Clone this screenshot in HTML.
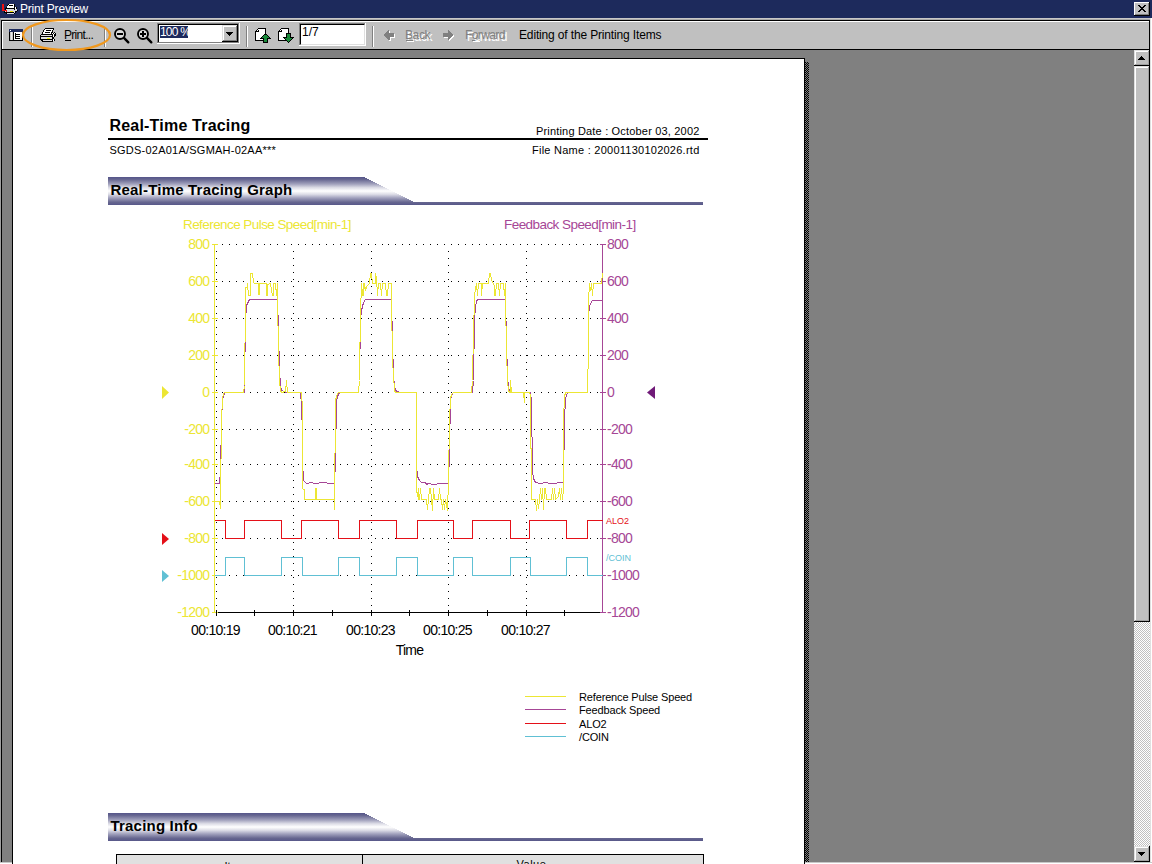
<!DOCTYPE html>
<html><head><meta charset="utf-8"><style>
html,body{margin:0;padding:0;width:1152px;height:864px;overflow:hidden;background:#808080;}
body{position:relative;font-family:"Liberation Sans", sans-serif;}
div{box-sizing:border-box;}
svg{position:absolute;overflow:visible;}
</style></head><body>
<div style="position:absolute;left:0px;top:0px;width:1152px;height:18px;background:#1d2a5c;"></div>
<svg style="left:0px;top:0px" width="18" height="14" shape-rendering="crispEdges"><rect x="2" y="4" width="2" height="1" fill="#f01010"/><rect x="8" y="4" width="1" height="1" fill="#000"/><rect x="9" y="4" width="5" height="1" fill="#fff"/><rect x="14" y="4" width="1" height="1" fill="#000"/><rect x="2" y="5" width="2" height="1" fill="#f01010"/><rect x="7" y="5" width="1" height="1" fill="#000"/><rect x="8" y="5" width="1" height="1" fill="#fff"/><rect x="9" y="5" width="4" height="1" fill="#000"/><rect x="13" y="5" width="1" height="1" fill="#fff"/><rect x="14" y="5" width="1" height="1" fill="#000"/><rect x="2" y="6" width="2" height="1" fill="#f01010"/><rect x="7" y="6" width="7" height="1" fill="#fff"/><rect x="14" y="6" width="1" height="1" fill="#000"/><rect x="2" y="7" width="2" height="1" fill="#f01010"/><rect x="6" y="7" width="1" height="1" fill="#000"/><rect x="7" y="7" width="7" height="1" fill="#fff"/><rect x="14" y="7" width="1" height="1" fill="#000"/><rect x="15" y="7" width="1" height="1" fill="#fff"/><rect x="16" y="7" width="1" height="1" fill="#000"/><rect x="2" y="8" width="2" height="1" fill="#f01010"/><rect x="5" y="8" width="10" height="1" fill="#000"/><rect x="15" y="8" width="1" height="1" fill="#fff"/><rect x="16" y="8" width="1" height="1" fill="#000"/><rect x="2" y="9" width="2" height="1" fill="#f01010"/><rect x="5" y="9" width="1" height="1" fill="#000"/><rect x="6" y="9" width="8" height="1" fill="#d8d8e0"/><rect x="14" y="9" width="1" height="1" fill="#000"/><rect x="15" y="9" width="2" height="1" fill="#d8d8e0"/><rect x="2" y="10" width="5" height="1" fill="#f01010"/><rect x="7" y="10" width="10" height="1" fill="#d8d8e0"/><rect x="17" y="10" width="1" height="1" fill="#000"/><rect x="4" y="11" width="1" height="1" fill="#000"/><rect x="5" y="11" width="1" height="1" fill="#d8d8e0"/><rect x="6" y="11" width="1" height="1" fill="#f01010"/><rect x="7" y="11" width="3" height="1" fill="#d8d8e0"/><rect x="10" y="11" width="3" height="1" fill="#f0e000"/><rect x="13" y="11" width="2" height="1" fill="#d8d8e0"/><rect x="15" y="11" width="2" height="1" fill="#000"/><rect x="4" y="12" width="10" height="1" fill="#000"/><rect x="14" y="12" width="1" height="1" fill="#d8d8e0"/><rect x="15" y="12" width="1" height="1" fill="#000"/><rect x="6" y="13" width="1" height="1" fill="#000"/><rect x="7" y="13" width="7" height="1" fill="#d8d8e0"/><rect x="14" y="13" width="1" height="1" fill="#000"/></svg>
<div style="position:absolute;left:20px;top:3px;font-size:12px;line-height:12px;color:#fff;font-weight:400;letter-spacing:-0.2px;white-space:pre;">Print Preview</div>
<svg style="position:absolute;left:1134px;top:2px" width="16" height="14" shape-rendering="crispEdges">
<rect x="0" y="0" width="16" height="14" fill="#000"/><rect x="0" y="0" width="15" height="13" fill="#fff"/>
<rect x="1" y="1" width="14" height="12" fill="#808080"/><rect x="1" y="1" width="13" height="11" fill="#c0c0c0"/>
<path d="M4 3h2v1h1v1h2v-1h1v-1h2v1h-1v1h-1v1h-1v1h1v1h1v1h1v1h-2v-1h-1v-1h-2v1h-1v1h-2v-1h1v-1h1v-1h1v-1h-1v-1h-1v-1h-1z" fill="#000"/>
</svg>
<div style="position:absolute;left:0px;top:18px;width:1152px;height:2px;background:#c8c8c8;"></div>
<div style="position:absolute;left:0px;top:19px;width:1152px;height:1px;background:#a8a8a8;"></div>
<div style="position:absolute;left:0px;top:20px;width:1152px;height:30px;background:#c0c0c0;"></div>
<div style="position:absolute;left:0px;top:20px;width:1150px;height:1px;background:#000;"></div>
<div style="position:absolute;left:1px;top:20px;width:1px;height:844px;background:#000;"></div>
<div style="position:absolute;left:2px;top:21px;width:1147px;height:1px;background:#fff;"></div>
<div style="position:absolute;left:2px;top:21px;width:1px;height:28px;background:#fff;"></div>
<div style="position:absolute;left:1149px;top:20px;width:1px;height:30px;background:#000;"></div>
<div style="position:absolute;left:1150px;top:18px;width:1px;height:846px;background:#e0e0e0;"></div>
<div style="position:absolute;left:1151px;top:18px;width:1px;height:846px;background:#fff;"></div>
<div style="position:absolute;left:0px;top:18px;width:1px;height:846px;background:#a0a0a0;"></div>
<div style="position:absolute;left:2px;top:49px;width:1147px;height:1px;background:#000;"></div>
<div style="position:absolute;left:2px;top:50px;width:1132px;height:812px;background:#808080;"></div>
<div style="position:absolute;left:0px;top:862px;width:1152px;height:1px;background:#c8c8c8;"></div>
<div style="position:absolute;left:0px;top:863px;width:1152px;height:1px;background:#fff;"></div>
<div style="position:absolute;left:31px;top:27px;width:1px;height:20px;background:#808080;"></div>
<div style="position:absolute;left:32px;top:27px;width:1px;height:20px;background:#fff;"></div>
<div style="position:absolute;left:104px;top:27px;width:1px;height:20px;background:#808080;"></div>
<div style="position:absolute;left:105px;top:27px;width:1px;height:20px;background:#fff;"></div>
<div style="position:absolute;left:246px;top:26px;width:1px;height:21px;background:#808080;"></div>
<div style="position:absolute;left:247px;top:26px;width:1px;height:21px;background:#fff;"></div>
<div style="position:absolute;left:372px;top:26px;width:1px;height:21px;background:#808080;"></div>
<div style="position:absolute;left:373px;top:26px;width:1px;height:21px;background:#fff;"></div>
<svg style="left:9px;top:29px" width="14" height="12" shape-rendering="crispEdges"><rect x="0" y="0" width="14" height="1" fill="#1d2a5c"/><rect x="0" y="1" width="1" height="1" fill="#1d2a5c"/><rect x="1" y="1" width="1" height="1" fill="#fff"/><rect x="2" y="1" width="12" height="1" fill="#1d2a5c"/><rect x="0" y="2" width="14" height="1" fill="#1d2a5c"/><rect x="0" y="3" width="1" height="1" fill="#000"/><rect x="1" y="3" width="1" height="1" fill="#c8c8c8"/><rect x="2" y="3" width="1" height="1" fill="#e8e8e8"/><rect x="3" y="3" width="1" height="1" fill="#c8c8c8"/><rect x="4" y="3" width="1" height="1" fill="#000"/><rect x="5" y="3" width="8" height="1" fill="#fff"/><rect x="13" y="3" width="1" height="1" fill="#000"/><rect x="0" y="4" width="1" height="1" fill="#000"/><rect x="1" y="4" width="1" height="1" fill="#c8c8c8"/><rect x="2" y="4" width="1" height="1" fill="#e8e8e8"/><rect x="3" y="4" width="1" height="1" fill="#c8c8c8"/><rect x="4" y="4" width="1" height="1" fill="#000"/><rect x="5" y="4" width="1" height="1" fill="#fff"/><rect x="6" y="4" width="1" height="1" fill="#000"/><rect x="7" y="4" width="6" height="1" fill="#fff"/><rect x="13" y="4" width="1" height="1" fill="#000"/><rect x="0" y="5" width="1" height="1" fill="#000"/><rect x="1" y="5" width="1" height="1" fill="#c8c8c8"/><rect x="2" y="5" width="1" height="1" fill="#e8e8e8"/><rect x="3" y="5" width="1" height="1" fill="#c8c8c8"/><rect x="4" y="5" width="1" height="1" fill="#000"/><rect x="5" y="5" width="1" height="1" fill="#fff"/><rect x="6" y="5" width="5" height="1" fill="#000"/><rect x="11" y="5" width="2" height="1" fill="#fff"/><rect x="13" y="5" width="1" height="1" fill="#000"/><rect x="0" y="6" width="1" height="1" fill="#000"/><rect x="1" y="6" width="1" height="1" fill="#c8c8c8"/><rect x="2" y="6" width="1" height="1" fill="#e8e8e8"/><rect x="3" y="6" width="1" height="1" fill="#c8c8c8"/><rect x="4" y="6" width="1" height="1" fill="#000"/><rect x="5" y="6" width="1" height="1" fill="#fff"/><rect x="6" y="6" width="1" height="1" fill="#000"/><rect x="7" y="6" width="6" height="1" fill="#fff"/><rect x="13" y="6" width="1" height="1" fill="#000"/><rect x="0" y="7" width="1" height="1" fill="#000"/><rect x="1" y="7" width="1" height="1" fill="#c8c8c8"/><rect x="2" y="7" width="1" height="1" fill="#e8e8e8"/><rect x="3" y="7" width="1" height="1" fill="#c8c8c8"/><rect x="4" y="7" width="1" height="1" fill="#000"/><rect x="5" y="7" width="1" height="1" fill="#fff"/><rect x="6" y="7" width="5" height="1" fill="#000"/><rect x="11" y="7" width="2" height="1" fill="#fff"/><rect x="13" y="7" width="1" height="1" fill="#000"/><rect x="0" y="8" width="1" height="1" fill="#000"/><rect x="1" y="8" width="1" height="1" fill="#c8c8c8"/><rect x="2" y="8" width="1" height="1" fill="#e8e8e8"/><rect x="3" y="8" width="1" height="1" fill="#c8c8c8"/><rect x="4" y="8" width="1" height="1" fill="#000"/><rect x="5" y="8" width="1" height="1" fill="#fff"/><rect x="6" y="8" width="1" height="1" fill="#000"/><rect x="7" y="8" width="6" height="1" fill="#fff"/><rect x="13" y="8" width="1" height="1" fill="#000"/><rect x="0" y="9" width="1" height="1" fill="#000"/><rect x="1" y="9" width="1" height="1" fill="#c8c8c8"/><rect x="2" y="9" width="1" height="1" fill="#e8e8e8"/><rect x="3" y="9" width="1" height="1" fill="#c8c8c8"/><rect x="4" y="9" width="1" height="1" fill="#000"/><rect x="5" y="9" width="1" height="1" fill="#fff"/><rect x="6" y="9" width="5" height="1" fill="#000"/><rect x="11" y="9" width="2" height="1" fill="#fff"/><rect x="13" y="9" width="1" height="1" fill="#000"/><rect x="0" y="10" width="1" height="1" fill="#000"/><rect x="1" y="10" width="1" height="1" fill="#c8c8c8"/><rect x="2" y="10" width="1" height="1" fill="#e8e8e8"/><rect x="3" y="10" width="1" height="1" fill="#c8c8c8"/><rect x="4" y="10" width="1" height="1" fill="#000"/><rect x="5" y="10" width="8" height="1" fill="#fff"/><rect x="13" y="10" width="1" height="1" fill="#000"/><rect x="0" y="11" width="14" height="1" fill="#000"/></svg>
<svg style="left:40px;top:28px" width="16" height="14" shape-rendering="crispEdges"><rect x="5" y="0" width="9" height="1" fill="#000"/><rect x="4" y="1" width="1" height="1" fill="#000"/><rect x="5" y="1" width="8" height="1" fill="#fff"/><rect x="13" y="1" width="1" height="1" fill="#000"/><rect x="3" y="2" width="1" height="1" fill="#000"/><rect x="4" y="2" width="2" height="1" fill="#fff"/><rect x="6" y="2" width="5" height="1" fill="#000"/><rect x="11" y="2" width="1" height="1" fill="#fff"/><rect x="12" y="2" width="1" height="1" fill="#000"/><rect x="3" y="3" width="1" height="1" fill="#000"/><rect x="4" y="3" width="8" height="1" fill="#fff"/><rect x="12" y="3" width="1" height="1" fill="#000"/><rect x="2" y="4" width="1" height="1" fill="#000"/><rect x="3" y="4" width="2" height="1" fill="#fff"/><rect x="5" y="4" width="5" height="1" fill="#000"/><rect x="10" y="4" width="1" height="1" fill="#fff"/><rect x="11" y="4" width="2" height="1" fill="#000"/><rect x="14" y="4" width="1" height="1" fill="#000"/><rect x="2" y="5" width="1" height="1" fill="#000"/><rect x="3" y="5" width="8" height="1" fill="#fff"/><rect x="11" y="5" width="1" height="1" fill="#000"/><rect x="12" y="5" width="1" height="1" fill="#fff"/><rect x="13" y="5" width="1" height="1" fill="#000"/><rect x="14" y="5" width="1" height="1" fill="#fff"/><rect x="15" y="5" width="1" height="1" fill="#000"/><rect x="1" y="6" width="12" height="1" fill="#000"/><rect x="13" y="6" width="1" height="1" fill="#fff"/><rect x="14" y="6" width="2" height="1" fill="#000"/><rect x="0" y="7" width="1" height="1" fill="#000"/><rect x="1" y="7" width="11" height="1" fill="#e0e0e0"/><rect x="12" y="7" width="1" height="1" fill="#000"/><rect x="13" y="7" width="1" height="1" fill="#fff"/><rect x="14" y="7" width="2" height="1" fill="#000"/><rect x="0" y="8" width="13" height="1" fill="#000"/><rect x="13" y="8" width="1" height="1" fill="#fff"/><rect x="14" y="8" width="1" height="1" fill="#000"/><rect x="0" y="9" width="1" height="1" fill="#000"/><rect x="1" y="9" width="11" height="1" fill="#e0e0e0"/><rect x="12" y="9" width="2" height="1" fill="#000"/><rect x="0" y="10" width="1" height="1" fill="#000"/><rect x="1" y="10" width="6" height="1" fill="#e0e0e0"/><rect x="7" y="10" width="3" height="1" fill="#f0f000"/><rect x="10" y="10" width="2" height="1" fill="#e0e0e0"/><rect x="12" y="10" width="2" height="1" fill="#000"/><rect x="0" y="11" width="13" height="1" fill="#000"/><rect x="13" y="11" width="1" height="1" fill="#fff"/><rect x="14" y="11" width="1" height="1" fill="#000"/><rect x="1" y="12" width="2" height="1" fill="#000"/><rect x="3" y="12" width="9" height="1" fill="#e0e0e0"/><rect x="12" y="12" width="1" height="1" fill="#000"/><rect x="13" y="12" width="1" height="1" fill="#fff"/><rect x="14" y="12" width="1" height="1" fill="#000"/><rect x="2" y="13" width="11" height="1" fill="#000"/></svg>
<div style="position:absolute;left:64px;top:29px;font-size:12px;line-height:12px;color:#000;font-weight:400;letter-spacing:-0.7px;white-space:pre;">Print...</div>
<div style="position:absolute;left:65px;top:40px;width:6px;height:1px;background:#000;"></div>
<svg style="left:114px;top:28px" width="16" height="16">
<circle cx="6" cy="6" r="5" fill="#dcdcdc" stroke="#000" stroke-width="1.9"/>
<line x1="10.2" y1="10.2" x2="14.3" y2="14.3" stroke="#000" stroke-width="2.4" stroke-linecap="round"/>
<g shape-rendering="crispEdges"><rect x="3" y="5" width="6" height="2" fill="#000"/></g></svg>
<svg style="left:137px;top:28px" width="16" height="16">
<circle cx="6" cy="6" r="5" fill="#dcdcdc" stroke="#000" stroke-width="1.9"/>
<line x1="10.2" y1="10.2" x2="14.3" y2="14.3" stroke="#000" stroke-width="2.4" stroke-linecap="round"/>
<g shape-rendering="crispEdges"><rect x="3" y="5" width="6" height="2" fill="#000"/><rect x="5" y="3" width="2" height="6" fill="#000"/></g></svg>
<div style="position:absolute;left:157px;top:23px;width:83px;height:21px;background:#fff;"></div>
<div style="position:absolute;left:157px;top:23px;width:82px;height:20px;background:#808080;"></div>
<div style="position:absolute;left:158px;top:24px;width:80px;height:18px;background:#000;"></div>
<div style="position:absolute;left:159px;top:25px;width:79px;height:17px;background:#fff;"></div>
<div style="position:absolute;left:159px;top:25px;width:63px;height:17px;background:#fff;"></div>
<div style="position:absolute;left:160px;top:26px;width:28px;height:12px;background:#1d2a5c;"></div>
<div style="position:absolute;left:160px;top:26px;font-size:12px;line-height:12px;color:#fff;font-weight:400;letter-spacing:-0.8px;white-space:pre;">100 %</div>
<svg style="left:222px;top:25px" width="16" height="17" shape-rendering="crispEdges">
<rect x="0" y="0" width="16" height="17" fill="#000"/><rect x="0" y="0" width="15" height="16" fill="#c0c0c0"/>
<rect x="0" y="0" width="15" height="1" fill="#dfdfdf"/><rect x="0" y="0" width="1" height="16" fill="#dfdfdf"/>
<rect x="1" y="1" width="13" height="1" fill="#fff"/><rect x="1" y="1" width="1" height="14" fill="#fff"/>
<rect x="1" y="15" width="14" height="1" fill="#808080"/><rect x="14" y="1" width="1" height="15" fill="#808080"/>
<path d="M4 7h7v1h-1v1h-1v1h-1v1h-1v-1h-1v-1h-1v-1h-1z" fill="#000"/>
</svg>
<svg style="left:255px;top:28px" width="16" height="15" shape-rendering="crispEdges"><rect x="3" y="0" width="8" height="1" fill="#000"/><rect x="2" y="1" width="1" height="1" fill="#000"/><rect x="3" y="1" width="7" height="1" fill="#fff"/><rect x="10" y="1" width="1" height="1" fill="#000"/><rect x="1" y="2" width="1" height="1" fill="#000"/><rect x="2" y="2" width="1" height="1" fill="#fff"/><rect x="3" y="2" width="1" height="1" fill="#000"/><rect x="4" y="2" width="6" height="1" fill="#fff"/><rect x="10" y="2" width="1" height="1" fill="#000"/><rect x="0" y="3" width="4" height="1" fill="#000"/><rect x="4" y="3" width="6" height="1" fill="#fff"/><rect x="10" y="3" width="1" height="1" fill="#000"/><rect x="0" y="4" width="1" height="1" fill="#000"/><rect x="1" y="4" width="9" height="1" fill="#fff"/><rect x="10" y="4" width="1" height="1" fill="#000"/><rect x="0" y="5" width="1" height="1" fill="#000"/><rect x="1" y="5" width="9" height="1" fill="#fff"/><rect x="10" y="5" width="1" height="1" fill="#000"/><rect x="0" y="6" width="1" height="1" fill="#000"/><rect x="1" y="6" width="8" height="1" fill="#fff"/><rect x="9" y="6" width="3" height="1" fill="#000"/><rect x="0" y="7" width="1" height="1" fill="#000"/><rect x="1" y="7" width="7" height="1" fill="#fff"/><rect x="8" y="7" width="1" height="1" fill="#000"/><rect x="9" y="7" width="3" height="1" fill="#1a8a3a"/><rect x="12" y="7" width="1" height="1" fill="#000"/><rect x="0" y="8" width="1" height="1" fill="#000"/><rect x="1" y="8" width="6" height="1" fill="#fff"/><rect x="7" y="8" width="1" height="1" fill="#000"/><rect x="8" y="8" width="5" height="1" fill="#1a8a3a"/><rect x="13" y="8" width="1" height="1" fill="#000"/><rect x="0" y="9" width="1" height="1" fill="#000"/><rect x="1" y="9" width="5" height="1" fill="#fff"/><rect x="6" y="9" width="1" height="1" fill="#000"/><rect x="7" y="9" width="7" height="1" fill="#1a8a3a"/><rect x="14" y="9" width="1" height="1" fill="#000"/><rect x="0" y="10" width="1" height="1" fill="#000"/><rect x="1" y="10" width="4" height="1" fill="#fff"/><rect x="5" y="10" width="4" height="1" fill="#000"/><rect x="9" y="10" width="3" height="1" fill="#1a8a3a"/><rect x="12" y="10" width="4" height="1" fill="#000"/><rect x="0" y="11" width="1" height="1" fill="#000"/><rect x="1" y="11" width="7" height="1" fill="#fff"/><rect x="8" y="11" width="1" height="1" fill="#000"/><rect x="9" y="11" width="3" height="1" fill="#1a8a3a"/><rect x="12" y="11" width="1" height="1" fill="#000"/><rect x="0" y="12" width="9" height="1" fill="#000"/><rect x="9" y="12" width="3" height="1" fill="#1a8a3a"/><rect x="12" y="12" width="1" height="1" fill="#000"/><rect x="8" y="13" width="1" height="1" fill="#000"/><rect x="9" y="13" width="3" height="1" fill="#1a8a3a"/><rect x="12" y="13" width="1" height="1" fill="#000"/><rect x="8" y="14" width="5" height="1" fill="#000"/></svg>
<svg style="left:278px;top:28px" width="16" height="15" shape-rendering="crispEdges"><rect x="3" y="0" width="8" height="1" fill="#000"/><rect x="2" y="1" width="1" height="1" fill="#000"/><rect x="3" y="1" width="7" height="1" fill="#fff"/><rect x="10" y="1" width="1" height="1" fill="#000"/><rect x="1" y="2" width="1" height="1" fill="#000"/><rect x="2" y="2" width="1" height="1" fill="#fff"/><rect x="3" y="2" width="1" height="1" fill="#000"/><rect x="4" y="2" width="6" height="1" fill="#fff"/><rect x="10" y="2" width="1" height="1" fill="#000"/><rect x="0" y="3" width="4" height="1" fill="#000"/><rect x="4" y="3" width="6" height="1" fill="#fff"/><rect x="10" y="3" width="1" height="1" fill="#000"/><rect x="0" y="4" width="1" height="1" fill="#000"/><rect x="1" y="4" width="9" height="1" fill="#fff"/><rect x="10" y="4" width="1" height="1" fill="#000"/><rect x="0" y="5" width="1" height="1" fill="#000"/><rect x="1" y="5" width="7" height="1" fill="#fff"/><rect x="8" y="5" width="5" height="1" fill="#000"/><rect x="0" y="6" width="1" height="1" fill="#000"/><rect x="1" y="6" width="7" height="1" fill="#fff"/><rect x="8" y="6" width="1" height="1" fill="#000"/><rect x="9" y="6" width="3" height="1" fill="#1a8a3a"/><rect x="12" y="6" width="1" height="1" fill="#000"/><rect x="0" y="7" width="1" height="1" fill="#000"/><rect x="1" y="7" width="7" height="1" fill="#fff"/><rect x="8" y="7" width="1" height="1" fill="#000"/><rect x="9" y="7" width="3" height="1" fill="#1a8a3a"/><rect x="12" y="7" width="1" height="1" fill="#000"/><rect x="0" y="8" width="1" height="1" fill="#000"/><rect x="1" y="8" width="7" height="1" fill="#fff"/><rect x="8" y="8" width="1" height="1" fill="#000"/><rect x="9" y="8" width="3" height="1" fill="#1a8a3a"/><rect x="12" y="8" width="1" height="1" fill="#000"/><rect x="0" y="9" width="1" height="1" fill="#000"/><rect x="1" y="9" width="4" height="1" fill="#fff"/><rect x="5" y="9" width="4" height="1" fill="#000"/><rect x="9" y="9" width="3" height="1" fill="#1a8a3a"/><rect x="12" y="9" width="4" height="1" fill="#000"/><rect x="0" y="10" width="1" height="1" fill="#000"/><rect x="1" y="10" width="5" height="1" fill="#fff"/><rect x="6" y="10" width="1" height="1" fill="#000"/><rect x="7" y="10" width="7" height="1" fill="#1a8a3a"/><rect x="14" y="10" width="1" height="1" fill="#000"/><rect x="0" y="11" width="1" height="1" fill="#000"/><rect x="1" y="11" width="6" height="1" fill="#fff"/><rect x="7" y="11" width="1" height="1" fill="#000"/><rect x="8" y="11" width="5" height="1" fill="#1a8a3a"/><rect x="13" y="11" width="1" height="1" fill="#000"/><rect x="0" y="12" width="9" height="1" fill="#000"/><rect x="9" y="12" width="3" height="1" fill="#1a8a3a"/><rect x="12" y="12" width="1" height="1" fill="#000"/><rect x="9" y="13" width="1" height="1" fill="#000"/><rect x="10" y="13" width="1" height="1" fill="#1a8a3a"/><rect x="11" y="13" width="1" height="1" fill="#000"/><rect x="10" y="14" width="1" height="1" fill="#000"/></svg>
<div style="position:absolute;left:299px;top:23px;width:67px;height:23px;background:#fff;"></div>
<div style="position:absolute;left:299px;top:23px;width:66px;height:22px;background:#808080;"></div>
<div style="position:absolute;left:300px;top:24px;width:64px;height:20px;background:#000;"></div>
<div style="position:absolute;left:301px;top:25px;width:64px;height:20px;background:#dfdfdf;"></div>
<div style="position:absolute;left:301px;top:25px;width:63px;height:19px;background:#fff;"></div>
<div style="position:absolute;left:302px;top:26px;font-size:12px;line-height:12px;color:#000;font-weight:400;letter-spacing:0px;white-space:pre;">1/7</div>
<svg style="left:384px;top:31px" width="13" height="11" shape-rendering="crispEdges"><rect x="5" y="0" width="1" height="1" fill="#fff"/><rect x="4" y="1" width="2" height="1" fill="#fff"/><rect x="3" y="2" width="3" height="1" fill="#fff"/><rect x="2" y="3" width="9" height="1" fill="#fff"/><rect x="1" y="4" width="10" height="1" fill="#fff"/><rect x="1" y="5" width="10" height="1" fill="#fff"/><rect x="2" y="6" width="9" height="1" fill="#fff"/><rect x="3" y="7" width="4" height="1" fill="#fff"/><rect x="4" y="8" width="3" height="1" fill="#fff"/><rect x="5" y="9" width="2" height="1" fill="#fff"/></svg>
<svg style="left:383px;top:30px" width="13" height="11" shape-rendering="crispEdges"><rect x="5" y="0" width="1" height="1" fill="#808080"/><rect x="4" y="1" width="2" height="1" fill="#808080"/><rect x="3" y="2" width="3" height="1" fill="#808080"/><rect x="2" y="3" width="9" height="1" fill="#808080"/><rect x="1" y="4" width="10" height="1" fill="#808080"/><rect x="1" y="5" width="10" height="1" fill="#808080"/><rect x="2" y="6" width="9" height="1" fill="#808080"/><rect x="3" y="7" width="4" height="1" fill="#808080"/><rect x="4" y="8" width="3" height="1" fill="#808080"/><rect x="5" y="9" width="2" height="1" fill="#808080"/></svg>
<svg style="left:443px;top:31px" width="13" height="11" shape-rendering="crispEdges"><rect x="6" y="0" width="1" height="1" fill="#fff"/><rect x="6" y="1" width="2" height="1" fill="#fff"/><rect x="6" y="2" width="3" height="1" fill="#fff"/><rect x="1" y="3" width="9" height="1" fill="#fff"/><rect x="1" y="4" width="10" height="1" fill="#fff"/><rect x="1" y="5" width="10" height="1" fill="#fff"/><rect x="1" y="6" width="9" height="1" fill="#fff"/><rect x="6" y="7" width="3" height="1" fill="#fff"/><rect x="6" y="8" width="2" height="1" fill="#fff"/><rect x="6" y="9" width="1" height="1" fill="#fff"/></svg>
<svg style="left:442px;top:30px" width="13" height="11" shape-rendering="crispEdges"><rect x="6" y="0" width="1" height="1" fill="#808080"/><rect x="6" y="1" width="2" height="1" fill="#808080"/><rect x="6" y="2" width="3" height="1" fill="#808080"/><rect x="1" y="3" width="9" height="1" fill="#808080"/><rect x="1" y="4" width="10" height="1" fill="#808080"/><rect x="1" y="5" width="10" height="1" fill="#808080"/><rect x="1" y="6" width="9" height="1" fill="#808080"/><rect x="6" y="7" width="3" height="1" fill="#808080"/><rect x="6" y="8" width="2" height="1" fill="#808080"/><rect x="6" y="9" width="1" height="1" fill="#808080"/></svg>
<div style="position:absolute;left:406px;top:30px;font-size:12px;line-height:12px;color:#fff;font-weight:400;letter-spacing:-0.4px;white-space:pre;margin:1px 0 0 1px;">Back</div>
<div style="position:absolute;left:405px;top:29px;font-size:12px;line-height:12px;color:#808080;font-weight:400;letter-spacing:-0.4px;white-space:pre;">Back</div>
<div style="position:absolute;left:407px;top:41px;width:7px;height:1px;background:#fff;"></div>
<div style="position:absolute;left:406px;top:40px;width:7px;height:1px;background:#808080;"></div>
<div style="position:absolute;left:473px;top:41px;width:7px;height:1px;background:#fff;"></div>
<div style="position:absolute;left:472px;top:40px;width:7px;height:1px;background:#808080;"></div>
<div style="position:absolute;left:466px;top:30px;font-size:12px;line-height:12px;color:#fff;font-weight:400;letter-spacing:-0.6px;white-space:pre;margin:1px 0 0 1px;">Forward</div>
<div style="position:absolute;left:465px;top:29px;font-size:12px;line-height:12px;color:#808080;font-weight:400;letter-spacing:-0.6px;white-space:pre;">Forward</div>
<div style="position:absolute;left:519px;top:29px;font-size:12px;line-height:12px;color:#000;font-weight:400;letter-spacing:-0.15px;white-space:pre;">Editing of the Printing Items</div>
<svg style="left:0;top:0" width="120" height="60">
<ellipse cx="66.5" cy="35" rx="43.5" ry="15" fill="none" stroke="#f0981e" stroke-width="2.2"/>
</svg>
<div style="position:absolute;left:1134px;top:50px;width:16px;height:812px;background:#c0c0c0;"></div>
<svg style="left:1134px;top:621px" width="16" height="226">
<defs><pattern id="dith" width="2" height="2" patternUnits="userSpaceOnUse"><rect width="2" height="2" fill="#c0c0c0"/><rect width="1" height="1" fill="#fff"/><rect x="1" y="1" width="1" height="1" fill="#fff"/></pattern></defs>
<rect width="16" height="226" fill="url(#dith)" shape-rendering="crispEdges"/>
</svg>
<div style="position:absolute;left:1134px;top:50px;width:16px;height:16px;background:#000;"></div>
<div style="position:absolute;left:1134px;top:50px;width:15px;height:15px;background:#dfdfdf;"></div>
<div style="position:absolute;left:1135px;top:51px;width:14px;height:14px;background:#909090;"></div>
<div style="position:absolute;left:1135px;top:51px;width:13px;height:13px;background:#fff;"></div>
<div style="position:absolute;left:1136px;top:52px;width:12px;height:12px;background:#c0c0c0;"></div>
<div style="position:absolute;left:1148px;top:51px;width:1px;height:14px;background:#a0a0a0;"></div>
<div style="position:absolute;left:1135px;top:64px;width:14px;height:1px;background:#a0a0a0;"></div>
<svg style="left:1138px;top:56px" width="7" height="4" shape-rendering="crispEdges"><path d="M3 0h1v1h1v1h1v1h1v1h-7v-1h1v-1h1v-1h1z" fill="#000"/></svg>
<div style="position:absolute;left:1134px;top:66px;width:16px;height:556px;background:#000;"></div>
<div style="position:absolute;left:1134px;top:66px;width:15px;height:555px;background:#dfdfdf;"></div>
<div style="position:absolute;left:1135px;top:67px;width:14px;height:554px;background:#909090;"></div>
<div style="position:absolute;left:1135px;top:67px;width:13px;height:553px;background:#fff;"></div>
<div style="position:absolute;left:1136px;top:68px;width:12px;height:552px;background:#c0c0c0;"></div>
<div style="position:absolute;left:1148px;top:67px;width:1px;height:554px;background:#a0a0a0;"></div>
<div style="position:absolute;left:1135px;top:620px;width:14px;height:1px;background:#a0a0a0;"></div>
<div style="position:absolute;left:1134px;top:846px;width:16px;height:16px;background:#000;"></div>
<div style="position:absolute;left:1134px;top:846px;width:15px;height:15px;background:#dfdfdf;"></div>
<div style="position:absolute;left:1135px;top:847px;width:14px;height:14px;background:#909090;"></div>
<div style="position:absolute;left:1135px;top:847px;width:13px;height:13px;background:#fff;"></div>
<div style="position:absolute;left:1136px;top:848px;width:12px;height:12px;background:#c0c0c0;"></div>
<div style="position:absolute;left:1148px;top:847px;width:1px;height:14px;background:#a0a0a0;"></div>
<div style="position:absolute;left:1135px;top:860px;width:14px;height:1px;background:#a0a0a0;"></div>
<svg style="left:1138px;top:852px" width="7" height="4" shape-rendering="crispEdges"><path d="M0 0h7v1h-1v1h-1v1h-1v1h-1v-1h-1v-1h-1v-1h-1z" fill="#000"/></svg>
<div style="position:absolute;left:12px;top:58px;width:793px;height:806px;background:#000;"></div>
<div style="position:absolute;left:13px;top:59px;width:791px;height:805px;background:#fff;"></div>
<svg style="left:805px;top:62px" width="4" height="800" shape-rendering="crispEdges">
<defs><pattern id="shd" width="2" height="2" patternUnits="userSpaceOnUse"><rect width="2" height="2" fill="#808080"/><rect width="1" height="1" fill="#000"/><rect x="1" y="1" width="1" height="1" fill="#000"/></pattern></defs>
<rect width="4" height="800" fill="url(#shd)"/></svg>
<svg style="left:0;top:0" width="1152" height="862" viewBox="0 0 1152 862" font-family="Liberation Sans, sans-serif"><defs><linearGradient id="hg" x1="0" y1="0" x2="0" y2="1">
<stop offset="0" stop-color="#55558a"/><stop offset="0.08" stop-color="#64648f"/><stop offset="0.25" stop-color="#a0a0bc"/>
<stop offset="0.38" stop-color="#dcdce6"/><stop offset="0.5" stop-color="#ffffff"/><stop offset="0.62" stop-color="#dcdce6"/>
<stop offset="0.75" stop-color="#a0a0bc"/><stop offset="0.9" stop-color="#66668f"/><stop offset="1" stop-color="#58588a"/>
</linearGradient></defs><text x="109.5" y="131" font-size="16" font-weight="700" fill="#000" letter-spacing="0.2">Real-Time Tracing</text><rect x="108" y="138" width="600" height="2" fill="#000" shape-rendering="crispEdges"/><text x="109.5" y="154" font-size="11" fill="#000" letter-spacing="0.23">SGDS-02A01A/SGMAH-02AA***</text><text x="699.5" y="135" font-size="11" fill="#000" text-anchor="end" letter-spacing="0.18">Printing Date : October 03, 2002</text><text x="699.5" y="154" font-size="11" fill="#000" text-anchor="end" letter-spacing="0.25">File Name : 20001130102026.rtd</text><svg x="0" y="177" width="1152" height="28" viewBox="0 0 1152 28" preserveAspectRatio="none"><path d="M108 0 H364 L414 25 H703 V28 H108 Z" fill="url(#hg)" shape-rendering="crispEdges"/></svg><text x="110.5" y="195" font-size="15" font-weight="700" fill="#000" letter-spacing="0.2">Real-Time Tracing Graph</text><svg x="0" y="813" width="1152" height="28" viewBox="0 0 1152 28" preserveAspectRatio="none"><path d="M108 0 H364 L414 25 H703 V28 H108 Z" fill="url(#hg)" shape-rendering="crispEdges"/></svg><text x="110.5" y="831" font-size="15" font-weight="700" fill="#000" letter-spacing="0.2">Tracing Info</text><g shape-rendering="crispEdges"><path d="M222 244h1v1h-1zM229 244h1v1h-1zM236 244h1v1h-1zM243 244h1v1h-1zM250 244h1v1h-1zM257 244h1v1h-1zM264 244h1v1h-1zM270 244h1v1h-1zM277 244h1v1h-1zM284 244h1v1h-1zM291 244h1v1h-1zM298 244h1v1h-1zM305 244h1v1h-1zM312 244h1v1h-1zM319 244h1v1h-1zM326 244h1v1h-1zM333 244h1v1h-1zM340 244h1v1h-1zM347 244h1v1h-1zM354 244h1v1h-1zM361 244h1v1h-1zM368 244h1v1h-1zM375 244h1v1h-1zM382 244h1v1h-1zM388 244h1v1h-1zM395 244h1v1h-1zM402 244h1v1h-1zM409 244h1v1h-1zM416 244h1v1h-1zM423 244h1v1h-1zM430 244h1v1h-1zM437 244h1v1h-1zM444 244h1v1h-1zM451 244h1v1h-1zM458 244h1v1h-1zM465 244h1v1h-1zM472 244h1v1h-1zM479 244h1v1h-1zM486 244h1v1h-1zM493 244h1v1h-1zM500 244h1v1h-1zM506 244h1v1h-1zM513 244h1v1h-1zM520 244h1v1h-1zM527 244h1v1h-1zM534 244h1v1h-1zM541 244h1v1h-1zM548 244h1v1h-1zM555 244h1v1h-1zM562 244h1v1h-1zM569 244h1v1h-1zM576 244h1v1h-1zM583 244h1v1h-1zM590 244h1v1h-1zM597 244h1v1h-1zM222 281h1v1h-1zM229 281h1v1h-1zM236 281h1v1h-1zM243 281h1v1h-1zM250 281h1v1h-1zM257 281h1v1h-1zM264 281h1v1h-1zM270 281h1v1h-1zM277 281h1v1h-1zM284 281h1v1h-1zM291 281h1v1h-1zM298 281h1v1h-1zM305 281h1v1h-1zM312 281h1v1h-1zM319 281h1v1h-1zM326 281h1v1h-1zM333 281h1v1h-1zM340 281h1v1h-1zM347 281h1v1h-1zM354 281h1v1h-1zM361 281h1v1h-1zM368 281h1v1h-1zM375 281h1v1h-1zM382 281h1v1h-1zM388 281h1v1h-1zM395 281h1v1h-1zM402 281h1v1h-1zM409 281h1v1h-1zM416 281h1v1h-1zM423 281h1v1h-1zM430 281h1v1h-1zM437 281h1v1h-1zM444 281h1v1h-1zM451 281h1v1h-1zM458 281h1v1h-1zM465 281h1v1h-1zM472 281h1v1h-1zM479 281h1v1h-1zM486 281h1v1h-1zM493 281h1v1h-1zM500 281h1v1h-1zM506 281h1v1h-1zM513 281h1v1h-1zM520 281h1v1h-1zM527 281h1v1h-1zM534 281h1v1h-1zM541 281h1v1h-1zM548 281h1v1h-1zM555 281h1v1h-1zM562 281h1v1h-1zM569 281h1v1h-1zM576 281h1v1h-1zM583 281h1v1h-1zM590 281h1v1h-1zM597 281h1v1h-1zM222 318h1v1h-1zM229 318h1v1h-1zM236 318h1v1h-1zM243 318h1v1h-1zM250 318h1v1h-1zM257 318h1v1h-1zM264 318h1v1h-1zM270 318h1v1h-1zM277 318h1v1h-1zM284 318h1v1h-1zM291 318h1v1h-1zM298 318h1v1h-1zM305 318h1v1h-1zM312 318h1v1h-1zM319 318h1v1h-1zM326 318h1v1h-1zM333 318h1v1h-1zM340 318h1v1h-1zM347 318h1v1h-1zM354 318h1v1h-1zM361 318h1v1h-1zM368 318h1v1h-1zM375 318h1v1h-1zM382 318h1v1h-1zM388 318h1v1h-1zM395 318h1v1h-1zM402 318h1v1h-1zM409 318h1v1h-1zM416 318h1v1h-1zM423 318h1v1h-1zM430 318h1v1h-1zM437 318h1v1h-1zM444 318h1v1h-1zM451 318h1v1h-1zM458 318h1v1h-1zM465 318h1v1h-1zM472 318h1v1h-1zM479 318h1v1h-1zM486 318h1v1h-1zM493 318h1v1h-1zM500 318h1v1h-1zM506 318h1v1h-1zM513 318h1v1h-1zM520 318h1v1h-1zM527 318h1v1h-1zM534 318h1v1h-1zM541 318h1v1h-1zM548 318h1v1h-1zM555 318h1v1h-1zM562 318h1v1h-1zM569 318h1v1h-1zM576 318h1v1h-1zM583 318h1v1h-1zM590 318h1v1h-1zM597 318h1v1h-1zM222 355h1v1h-1zM229 355h1v1h-1zM236 355h1v1h-1zM243 355h1v1h-1zM250 355h1v1h-1zM257 355h1v1h-1zM264 355h1v1h-1zM270 355h1v1h-1zM277 355h1v1h-1zM284 355h1v1h-1zM291 355h1v1h-1zM298 355h1v1h-1zM305 355h1v1h-1zM312 355h1v1h-1zM319 355h1v1h-1zM326 355h1v1h-1zM333 355h1v1h-1zM340 355h1v1h-1zM347 355h1v1h-1zM354 355h1v1h-1zM361 355h1v1h-1zM368 355h1v1h-1zM375 355h1v1h-1zM382 355h1v1h-1zM388 355h1v1h-1zM395 355h1v1h-1zM402 355h1v1h-1zM409 355h1v1h-1zM416 355h1v1h-1zM423 355h1v1h-1zM430 355h1v1h-1zM437 355h1v1h-1zM444 355h1v1h-1zM451 355h1v1h-1zM458 355h1v1h-1zM465 355h1v1h-1zM472 355h1v1h-1zM479 355h1v1h-1zM486 355h1v1h-1zM493 355h1v1h-1zM500 355h1v1h-1zM506 355h1v1h-1zM513 355h1v1h-1zM520 355h1v1h-1zM527 355h1v1h-1zM534 355h1v1h-1zM541 355h1v1h-1zM548 355h1v1h-1zM555 355h1v1h-1zM562 355h1v1h-1zM569 355h1v1h-1zM576 355h1v1h-1zM583 355h1v1h-1zM590 355h1v1h-1zM597 355h1v1h-1zM222 392h1v1h-1zM229 392h1v1h-1zM236 392h1v1h-1zM243 392h1v1h-1zM250 392h1v1h-1zM257 392h1v1h-1zM264 392h1v1h-1zM270 392h1v1h-1zM277 392h1v1h-1zM284 392h1v1h-1zM291 392h1v1h-1zM298 392h1v1h-1zM305 392h1v1h-1zM312 392h1v1h-1zM319 392h1v1h-1zM326 392h1v1h-1zM333 392h1v1h-1zM340 392h1v1h-1zM347 392h1v1h-1zM354 392h1v1h-1zM361 392h1v1h-1zM368 392h1v1h-1zM375 392h1v1h-1zM382 392h1v1h-1zM388 392h1v1h-1zM395 392h1v1h-1zM402 392h1v1h-1zM409 392h1v1h-1zM416 392h1v1h-1zM423 392h1v1h-1zM430 392h1v1h-1zM437 392h1v1h-1zM444 392h1v1h-1zM451 392h1v1h-1zM458 392h1v1h-1zM465 392h1v1h-1zM472 392h1v1h-1zM479 392h1v1h-1zM486 392h1v1h-1zM493 392h1v1h-1zM500 392h1v1h-1zM506 392h1v1h-1zM513 392h1v1h-1zM520 392h1v1h-1zM527 392h1v1h-1zM534 392h1v1h-1zM541 392h1v1h-1zM548 392h1v1h-1zM555 392h1v1h-1zM562 392h1v1h-1zM569 392h1v1h-1zM576 392h1v1h-1zM583 392h1v1h-1zM590 392h1v1h-1zM597 392h1v1h-1zM222 429h1v1h-1zM229 429h1v1h-1zM236 429h1v1h-1zM243 429h1v1h-1zM250 429h1v1h-1zM257 429h1v1h-1zM264 429h1v1h-1zM270 429h1v1h-1zM277 429h1v1h-1zM284 429h1v1h-1zM291 429h1v1h-1zM298 429h1v1h-1zM305 429h1v1h-1zM312 429h1v1h-1zM319 429h1v1h-1zM326 429h1v1h-1zM333 429h1v1h-1zM340 429h1v1h-1zM347 429h1v1h-1zM354 429h1v1h-1zM361 429h1v1h-1zM368 429h1v1h-1zM375 429h1v1h-1zM382 429h1v1h-1zM388 429h1v1h-1zM395 429h1v1h-1zM402 429h1v1h-1zM409 429h1v1h-1zM416 429h1v1h-1zM423 429h1v1h-1zM430 429h1v1h-1zM437 429h1v1h-1zM444 429h1v1h-1zM451 429h1v1h-1zM458 429h1v1h-1zM465 429h1v1h-1zM472 429h1v1h-1zM479 429h1v1h-1zM486 429h1v1h-1zM493 429h1v1h-1zM500 429h1v1h-1zM506 429h1v1h-1zM513 429h1v1h-1zM520 429h1v1h-1zM527 429h1v1h-1zM534 429h1v1h-1zM541 429h1v1h-1zM548 429h1v1h-1zM555 429h1v1h-1zM562 429h1v1h-1zM569 429h1v1h-1zM576 429h1v1h-1zM583 429h1v1h-1zM590 429h1v1h-1zM597 429h1v1h-1zM222 464h1v1h-1zM229 464h1v1h-1zM236 464h1v1h-1zM243 464h1v1h-1zM250 464h1v1h-1zM257 464h1v1h-1zM264 464h1v1h-1zM270 464h1v1h-1zM277 464h1v1h-1zM284 464h1v1h-1zM291 464h1v1h-1zM298 464h1v1h-1zM305 464h1v1h-1zM312 464h1v1h-1zM319 464h1v1h-1zM326 464h1v1h-1zM333 464h1v1h-1zM340 464h1v1h-1zM347 464h1v1h-1zM354 464h1v1h-1zM361 464h1v1h-1zM368 464h1v1h-1zM375 464h1v1h-1zM382 464h1v1h-1zM388 464h1v1h-1zM395 464h1v1h-1zM402 464h1v1h-1zM409 464h1v1h-1zM416 464h1v1h-1zM423 464h1v1h-1zM430 464h1v1h-1zM437 464h1v1h-1zM444 464h1v1h-1zM451 464h1v1h-1zM458 464h1v1h-1zM465 464h1v1h-1zM472 464h1v1h-1zM479 464h1v1h-1zM486 464h1v1h-1zM493 464h1v1h-1zM500 464h1v1h-1zM506 464h1v1h-1zM513 464h1v1h-1zM520 464h1v1h-1zM527 464h1v1h-1zM534 464h1v1h-1zM541 464h1v1h-1zM548 464h1v1h-1zM555 464h1v1h-1zM562 464h1v1h-1zM569 464h1v1h-1zM576 464h1v1h-1zM583 464h1v1h-1zM590 464h1v1h-1zM597 464h1v1h-1zM222 501h1v1h-1zM229 501h1v1h-1zM236 501h1v1h-1zM243 501h1v1h-1zM250 501h1v1h-1zM257 501h1v1h-1zM264 501h1v1h-1zM270 501h1v1h-1zM277 501h1v1h-1zM284 501h1v1h-1zM291 501h1v1h-1zM298 501h1v1h-1zM305 501h1v1h-1zM312 501h1v1h-1zM319 501h1v1h-1zM326 501h1v1h-1zM333 501h1v1h-1zM340 501h1v1h-1zM347 501h1v1h-1zM354 501h1v1h-1zM361 501h1v1h-1zM368 501h1v1h-1zM375 501h1v1h-1zM382 501h1v1h-1zM388 501h1v1h-1zM395 501h1v1h-1zM402 501h1v1h-1zM409 501h1v1h-1zM416 501h1v1h-1zM423 501h1v1h-1zM430 501h1v1h-1zM437 501h1v1h-1zM444 501h1v1h-1zM451 501h1v1h-1zM458 501h1v1h-1zM465 501h1v1h-1zM472 501h1v1h-1zM479 501h1v1h-1zM486 501h1v1h-1zM493 501h1v1h-1zM500 501h1v1h-1zM506 501h1v1h-1zM513 501h1v1h-1zM520 501h1v1h-1zM527 501h1v1h-1zM534 501h1v1h-1zM541 501h1v1h-1zM548 501h1v1h-1zM555 501h1v1h-1zM562 501h1v1h-1zM569 501h1v1h-1zM576 501h1v1h-1zM583 501h1v1h-1zM590 501h1v1h-1zM597 501h1v1h-1zM222 538h1v1h-1zM229 538h1v1h-1zM236 538h1v1h-1zM243 538h1v1h-1zM250 538h1v1h-1zM257 538h1v1h-1zM264 538h1v1h-1zM270 538h1v1h-1zM277 538h1v1h-1zM284 538h1v1h-1zM291 538h1v1h-1zM298 538h1v1h-1zM305 538h1v1h-1zM312 538h1v1h-1zM319 538h1v1h-1zM326 538h1v1h-1zM333 538h1v1h-1zM340 538h1v1h-1zM347 538h1v1h-1zM354 538h1v1h-1zM361 538h1v1h-1zM368 538h1v1h-1zM375 538h1v1h-1zM382 538h1v1h-1zM388 538h1v1h-1zM395 538h1v1h-1zM402 538h1v1h-1zM409 538h1v1h-1zM416 538h1v1h-1zM423 538h1v1h-1zM430 538h1v1h-1zM437 538h1v1h-1zM444 538h1v1h-1zM451 538h1v1h-1zM458 538h1v1h-1zM465 538h1v1h-1zM472 538h1v1h-1zM479 538h1v1h-1zM486 538h1v1h-1zM493 538h1v1h-1zM500 538h1v1h-1zM506 538h1v1h-1zM513 538h1v1h-1zM520 538h1v1h-1zM527 538h1v1h-1zM534 538h1v1h-1zM541 538h1v1h-1zM548 538h1v1h-1zM555 538h1v1h-1zM562 538h1v1h-1zM569 538h1v1h-1zM576 538h1v1h-1zM583 538h1v1h-1zM590 538h1v1h-1zM597 538h1v1h-1zM222 575h1v1h-1zM229 575h1v1h-1zM236 575h1v1h-1zM243 575h1v1h-1zM250 575h1v1h-1zM257 575h1v1h-1zM264 575h1v1h-1zM270 575h1v1h-1zM277 575h1v1h-1zM284 575h1v1h-1zM291 575h1v1h-1zM298 575h1v1h-1zM305 575h1v1h-1zM312 575h1v1h-1zM319 575h1v1h-1zM326 575h1v1h-1zM333 575h1v1h-1zM340 575h1v1h-1zM347 575h1v1h-1zM354 575h1v1h-1zM361 575h1v1h-1zM368 575h1v1h-1zM375 575h1v1h-1zM382 575h1v1h-1zM388 575h1v1h-1zM395 575h1v1h-1zM402 575h1v1h-1zM409 575h1v1h-1zM416 575h1v1h-1zM423 575h1v1h-1zM430 575h1v1h-1zM437 575h1v1h-1zM444 575h1v1h-1zM451 575h1v1h-1zM458 575h1v1h-1zM465 575h1v1h-1zM472 575h1v1h-1zM479 575h1v1h-1zM486 575h1v1h-1zM493 575h1v1h-1zM500 575h1v1h-1zM506 575h1v1h-1zM513 575h1v1h-1zM520 575h1v1h-1zM527 575h1v1h-1zM534 575h1v1h-1zM541 575h1v1h-1zM548 575h1v1h-1zM555 575h1v1h-1zM562 575h1v1h-1zM569 575h1v1h-1zM576 575h1v1h-1zM583 575h1v1h-1zM590 575h1v1h-1zM597 575h1v1h-1zM216 251h1v1h-1zM216 258h1v1h-1zM216 265h1v1h-1zM216 272h1v1h-1zM216 279h1v1h-1zM216 286h1v1h-1zM216 293h1v1h-1zM216 299h1v1h-1zM216 306h1v1h-1zM216 313h1v1h-1zM216 320h1v1h-1zM216 327h1v1h-1zM216 334h1v1h-1zM216 341h1v1h-1zM216 348h1v1h-1zM216 355h1v1h-1zM216 362h1v1h-1zM216 369h1v1h-1zM216 376h1v1h-1zM216 383h1v1h-1zM216 390h1v1h-1zM216 397h1v1h-1zM216 404h1v1h-1zM216 411h1v1h-1zM216 417h1v1h-1zM216 424h1v1h-1zM216 431h1v1h-1zM216 438h1v1h-1zM216 445h1v1h-1zM216 452h1v1h-1zM216 459h1v1h-1zM216 466h1v1h-1zM216 473h1v1h-1zM216 480h1v1h-1zM216 487h1v1h-1zM216 494h1v1h-1zM216 501h1v1h-1zM216 508h1v1h-1zM216 515h1v1h-1zM216 522h1v1h-1zM216 529h1v1h-1zM216 535h1v1h-1zM216 542h1v1h-1zM216 549h1v1h-1zM216 556h1v1h-1zM216 563h1v1h-1zM216 570h1v1h-1zM216 577h1v1h-1zM216 584h1v1h-1zM216 591h1v1h-1zM216 598h1v1h-1zM216 605h1v1h-1zM293 251h1v1h-1zM293 258h1v1h-1zM293 265h1v1h-1zM293 272h1v1h-1zM293 279h1v1h-1zM293 286h1v1h-1zM293 293h1v1h-1zM293 299h1v1h-1zM293 306h1v1h-1zM293 313h1v1h-1zM293 320h1v1h-1zM293 327h1v1h-1zM293 334h1v1h-1zM293 341h1v1h-1zM293 348h1v1h-1zM293 355h1v1h-1zM293 362h1v1h-1zM293 369h1v1h-1zM293 376h1v1h-1zM293 383h1v1h-1zM293 390h1v1h-1zM293 397h1v1h-1zM293 404h1v1h-1zM293 411h1v1h-1zM293 417h1v1h-1zM293 424h1v1h-1zM293 431h1v1h-1zM293 438h1v1h-1zM293 445h1v1h-1zM293 452h1v1h-1zM293 459h1v1h-1zM293 466h1v1h-1zM293 473h1v1h-1zM293 480h1v1h-1zM293 487h1v1h-1zM293 494h1v1h-1zM293 501h1v1h-1zM293 508h1v1h-1zM293 515h1v1h-1zM293 522h1v1h-1zM293 529h1v1h-1zM293 535h1v1h-1zM293 542h1v1h-1zM293 549h1v1h-1zM293 556h1v1h-1zM293 563h1v1h-1zM293 570h1v1h-1zM293 577h1v1h-1zM293 584h1v1h-1zM293 591h1v1h-1zM293 598h1v1h-1zM293 605h1v1h-1zM371 251h1v1h-1zM371 258h1v1h-1zM371 265h1v1h-1zM371 272h1v1h-1zM371 279h1v1h-1zM371 286h1v1h-1zM371 293h1v1h-1zM371 299h1v1h-1zM371 306h1v1h-1zM371 313h1v1h-1zM371 320h1v1h-1zM371 327h1v1h-1zM371 334h1v1h-1zM371 341h1v1h-1zM371 348h1v1h-1zM371 355h1v1h-1zM371 362h1v1h-1zM371 369h1v1h-1zM371 376h1v1h-1zM371 383h1v1h-1zM371 390h1v1h-1zM371 397h1v1h-1zM371 404h1v1h-1zM371 411h1v1h-1zM371 417h1v1h-1zM371 424h1v1h-1zM371 431h1v1h-1zM371 438h1v1h-1zM371 445h1v1h-1zM371 452h1v1h-1zM371 459h1v1h-1zM371 466h1v1h-1zM371 473h1v1h-1zM371 480h1v1h-1zM371 487h1v1h-1zM371 494h1v1h-1zM371 501h1v1h-1zM371 508h1v1h-1zM371 515h1v1h-1zM371 522h1v1h-1zM371 529h1v1h-1zM371 535h1v1h-1zM371 542h1v1h-1zM371 549h1v1h-1zM371 556h1v1h-1zM371 563h1v1h-1zM371 570h1v1h-1zM371 577h1v1h-1zM371 584h1v1h-1zM371 591h1v1h-1zM371 598h1v1h-1zM371 605h1v1h-1zM448 251h1v1h-1zM448 258h1v1h-1zM448 265h1v1h-1zM448 272h1v1h-1zM448 279h1v1h-1zM448 286h1v1h-1zM448 293h1v1h-1zM448 299h1v1h-1zM448 306h1v1h-1zM448 313h1v1h-1zM448 320h1v1h-1zM448 327h1v1h-1zM448 334h1v1h-1zM448 341h1v1h-1zM448 348h1v1h-1zM448 355h1v1h-1zM448 362h1v1h-1zM448 369h1v1h-1zM448 376h1v1h-1zM448 383h1v1h-1zM448 390h1v1h-1zM448 397h1v1h-1zM448 404h1v1h-1zM448 411h1v1h-1zM448 417h1v1h-1zM448 424h1v1h-1zM448 431h1v1h-1zM448 438h1v1h-1zM448 445h1v1h-1zM448 452h1v1h-1zM448 459h1v1h-1zM448 466h1v1h-1zM448 473h1v1h-1zM448 480h1v1h-1zM448 487h1v1h-1zM448 494h1v1h-1zM448 501h1v1h-1zM448 508h1v1h-1zM448 515h1v1h-1zM448 522h1v1h-1zM448 529h1v1h-1zM448 535h1v1h-1zM448 542h1v1h-1zM448 549h1v1h-1zM448 556h1v1h-1zM448 563h1v1h-1zM448 570h1v1h-1zM448 577h1v1h-1zM448 584h1v1h-1zM448 591h1v1h-1zM448 598h1v1h-1zM448 605h1v1h-1zM526 251h1v1h-1zM526 258h1v1h-1zM526 265h1v1h-1zM526 272h1v1h-1zM526 279h1v1h-1zM526 286h1v1h-1zM526 293h1v1h-1zM526 299h1v1h-1zM526 306h1v1h-1zM526 313h1v1h-1zM526 320h1v1h-1zM526 327h1v1h-1zM526 334h1v1h-1zM526 341h1v1h-1zM526 348h1v1h-1zM526 355h1v1h-1zM526 362h1v1h-1zM526 369h1v1h-1zM526 376h1v1h-1zM526 383h1v1h-1zM526 390h1v1h-1zM526 397h1v1h-1zM526 404h1v1h-1zM526 411h1v1h-1zM526 417h1v1h-1zM526 424h1v1h-1zM526 431h1v1h-1zM526 438h1v1h-1zM526 445h1v1h-1zM526 452h1v1h-1zM526 459h1v1h-1zM526 466h1v1h-1zM526 473h1v1h-1zM526 480h1v1h-1zM526 487h1v1h-1zM526 494h1v1h-1zM526 501h1v1h-1zM526 508h1v1h-1zM526 515h1v1h-1zM526 522h1v1h-1zM526 529h1v1h-1zM526 535h1v1h-1zM526 542h1v1h-1zM526 549h1v1h-1zM526 556h1v1h-1zM526 563h1v1h-1zM526 570h1v1h-1zM526 577h1v1h-1zM526 584h1v1h-1zM526 591h1v1h-1zM526 598h1v1h-1zM526 605h1v1h-1z" fill="#000"/><rect x="214" y="244" width="1" height="369" fill="#ece634"/><rect x="602" y="244" width="1" height="369" fill="#a64696"/><rect x="214" y="612" width="389" height="1" fill="#000"/><rect x="212" y="244" width="6" height="1" fill="#ece634"/><rect x="600" y="244" width="6" height="1" fill="#a64696"/><rect x="212" y="281" width="6" height="1" fill="#ece634"/><rect x="600" y="281" width="6" height="1" fill="#a64696"/><rect x="212" y="318" width="6" height="1" fill="#ece634"/><rect x="600" y="318" width="6" height="1" fill="#a64696"/><rect x="212" y="355" width="6" height="1" fill="#ece634"/><rect x="600" y="355" width="6" height="1" fill="#a64696"/><rect x="212" y="392" width="6" height="1" fill="#ece634"/><rect x="600" y="392" width="6" height="1" fill="#a64696"/><rect x="212" y="429" width="6" height="1" fill="#ece634"/><rect x="600" y="429" width="6" height="1" fill="#a64696"/><rect x="212" y="464" width="6" height="1" fill="#ece634"/><rect x="600" y="464" width="6" height="1" fill="#a64696"/><rect x="212" y="501" width="6" height="1" fill="#ece634"/><rect x="600" y="501" width="6" height="1" fill="#a64696"/><rect x="212" y="538" width="6" height="1" fill="#ece634"/><rect x="600" y="538" width="6" height="1" fill="#a64696"/><rect x="212" y="575" width="6" height="1" fill="#ece634"/><rect x="600" y="575" width="6" height="1" fill="#a64696"/><rect x="212" y="612" width="6" height="1" fill="#ece634"/><rect x="600" y="612" width="6" height="1" fill="#a64696"/><rect x="216" y="610" width="1" height="6" fill="#000"/><rect x="254" y="610" width="1" height="6" fill="#000"/><rect x="293" y="610" width="1" height="6" fill="#000"/><rect x="332" y="610" width="1" height="6" fill="#000"/><rect x="371" y="610" width="1" height="6" fill="#000"/><rect x="409" y="610" width="1" height="6" fill="#000"/><rect x="448" y="610" width="1" height="6" fill="#000"/><rect x="487" y="610" width="1" height="6" fill="#000"/><rect x="526" y="610" width="1" height="6" fill="#000"/><rect x="564" y="610" width="1" height="6" fill="#000"/></g><text x="209.3" y="249" font-size="14" fill="#ece634" text-anchor="end" letter-spacing="-0.75">800</text><text x="607" y="249" font-size="14" fill="#a64696" letter-spacing="-0.75">800</text><text x="209.3" y="286" font-size="14" fill="#ece634" text-anchor="end" letter-spacing="-0.75">600</text><text x="607" y="286" font-size="14" fill="#a64696" letter-spacing="-0.75">600</text><text x="209.3" y="323" font-size="14" fill="#ece634" text-anchor="end" letter-spacing="-0.75">400</text><text x="607" y="323" font-size="14" fill="#a64696" letter-spacing="-0.75">400</text><text x="209.3" y="360" font-size="14" fill="#ece634" text-anchor="end" letter-spacing="-0.75">200</text><text x="607" y="360" font-size="14" fill="#a64696" letter-spacing="-0.75">200</text><text x="209.3" y="397" font-size="14" fill="#ece634" text-anchor="end" letter-spacing="-0.75">0</text><text x="607" y="397" font-size="14" fill="#a64696" letter-spacing="-0.75">0</text><text x="209.3" y="434" font-size="14" fill="#ece634" text-anchor="end" letter-spacing="-0.75">-200</text><text x="607" y="434" font-size="14" fill="#a64696" letter-spacing="-0.75">-200</text><text x="209.3" y="469" font-size="14" fill="#ece634" text-anchor="end" letter-spacing="-0.75">-400</text><text x="607" y="469" font-size="14" fill="#a64696" letter-spacing="-0.75">-400</text><text x="209.3" y="506" font-size="14" fill="#ece634" text-anchor="end" letter-spacing="-0.75">-600</text><text x="607" y="506" font-size="14" fill="#a64696" letter-spacing="-0.75">-600</text><text x="209.3" y="543" font-size="14" fill="#ece634" text-anchor="end" letter-spacing="-0.75">-800</text><text x="607" y="543" font-size="14" fill="#a64696" letter-spacing="-0.75">-800</text><text x="209.3" y="580" font-size="14" fill="#ece634" text-anchor="end" letter-spacing="-0.75">-1000</text><text x="607" y="580" font-size="14" fill="#a64696" letter-spacing="-0.75">-1000</text><text x="209.3" y="617" font-size="14" fill="#ece634" text-anchor="end" letter-spacing="-0.75">-1200</text><text x="607" y="617" font-size="14" fill="#a64696" letter-spacing="-0.75">-1200</text><text x="183" y="229" font-size="13.5" fill="#ece634" letter-spacing="-0.57">Reference Pulse Speed[min-1]</text><text x="504" y="229" font-size="13.5" fill="#a64696" letter-spacing="-0.56">Feedback Speed[min-1]</text><text x="215.5" y="635" font-size="14" fill="#000" text-anchor="middle" letter-spacing="-0.7">00:10:19</text><text x="292.5" y="635" font-size="14" fill="#000" text-anchor="middle" letter-spacing="-0.7">00:10:21</text><text x="370.5" y="635" font-size="14" fill="#000" text-anchor="middle" letter-spacing="-0.7">00:10:23</text><text x="447.5" y="635" font-size="14" fill="#000" text-anchor="middle" letter-spacing="-0.7">00:10:25</text><text x="525.5" y="635" font-size="14" fill="#000" text-anchor="middle" letter-spacing="-0.7">00:10:27</text><text x="409.5" y="655" font-size="14" fill="#000" text-anchor="middle" letter-spacing="-0.8">Time</text><text x="606" y="524" font-size="9" fill="#e41018">ALO2</text><text x="606" y="561" font-size="9" fill="#60c0d4">/COIN</text><path d="M162 386 L169 392.5 L162 399 Z" fill="#ece634"/><path d="M162 533 L169 539 L162 545 Z" fill="#e41018"/><path d="M162 570 L169 576 L162 582 Z" fill="#60c0d4"/><path d="M655 386 L647 392.5 L655 399 Z" fill="#701a78"/><g shape-rendering="crispEdges"><rect x="525" y="696" width="41" height="1" fill="#ece634"/><rect x="525" y="709" width="41" height="1" fill="#a64696"/><rect x="525" y="723" width="41" height="1" fill="#e41018"/><rect x="525" y="736" width="41" height="1" fill="#60c0d4"/></g><text x="579" y="701" font-size="11" fill="#000" letter-spacing="-0.15">Reference Pulse Speed</text><text x="579" y="714" font-size="11" fill="#000" letter-spacing="-0.15">Feedback Speed</text><text x="579" y="728" font-size="11" fill="#000" letter-spacing="-0.15">ALO2</text><text x="579" y="741" font-size="11" fill="#000" letter-spacing="-0.15">/COIN</text><g shape-rendering="crispEdges"><polyline points="214.5,520.5 225.5,520.5 225.5,538.5 244.5,538.5 244.5,520.5 281.5,520.5 281.5,538.5 301.5,538.5 301.5,520.5 338.5,520.5 338.5,538.5 359.5,538.5 359.5,520.5 396.5,520.5 396.5,538.5 417.5,538.5 417.5,520.5 453.5,520.5 453.5,538.5 472.5,538.5 472.5,520.5 510.5,520.5 510.5,538.5 529.5,538.5 529.5,520.5 566.5,520.5 566.5,538.5 587.5,538.5 587.5,520.5 602.5,520.5" fill="none" stroke="#e41018" stroke-width="1" stroke-linejoin="miter"/><polyline points="214.5,575.5 225.5,575.5 225.5,557.5 244.5,557.5 244.5,575.5 281.5,575.5 281.5,557.5 302.5,557.5 302.5,575.5 338.5,575.5 338.5,557.5 359.5,557.5 359.5,575.5 396.5,575.5 396.5,557.5 417.5,557.5 417.5,575.5 453.5,575.5 453.5,557.5 472.5,557.5 472.5,575.5 510.5,575.5 510.5,557.5 530.5,557.5 530.5,575.5 566.5,575.5 566.5,557.5 587.5,557.5 587.5,575.5 602.5,575.5" fill="none" stroke="#60c0d4" stroke-width="1" stroke-linejoin="miter"/><polyline points="214.5,483.5 219.5,483.5 220.5,470.5 221.5,420.5 222.5,400.5 223.5,395.5 225.5,392.5 244.5,392.5 244.5,385.5 245.5,320.5 246.5,305.5 247.5,303.5 248.5,301.5 249.5,299.5 277.5,299.5 278.5,330.5 279.5,370.5 280.5,385.5 281.5,390.5 284.5,391.5 286.5,392.5 301.5,392.5 300.5,393.5 300.5,397.5 301.5,400.5 301.5,418.5 302.5,420.5 302.5,470.5 303.5,472.5 303.5,480.5 304.5,481.5 306.5,483.5 312.5,482.5 313.5,483.5 318.5,483.5 319.5,482.5 326.5,482.5 327.5,483.5 334.5,483.5 335.5,460.5 336.5,400.5 337.5,396.5 339.5,392.5 358.5,392.5 359.5,380.5 360.5,320.5 361.5,310.5 363.5,302.5 365.5,299.5 391.5,299.5 392.5,340.5 393.5,375.5 394.5,385.5 395.5,390.5 397.5,391.5 400.5,392.5 416.5,392.5 416.5,465.5 417.5,476.5 419.5,480.5 421.5,482.5 425.5,482.5 426.5,484.5 428.5,483.5 433.5,484.5 440.5,483.5 448.5,483.5 449.5,450.5 450.5,400.5 451.5,395.5 453.5,392.5 472.5,392.5 473.5,380.5 474.5,320.5 475.5,306.5 476.5,301.5 477.5,299.5 505.5,299.5 506.5,340.5 507.5,375.5 508.5,387.5 509.5,391.5 511.5,392.5 514.5,392.5 530.5,392.5 531.5,400.5 532.5,470.5 533.5,478.5 535.5,482.5 540.5,483.5 545.5,482.5 550.5,483.5 563.5,482.5 564.5,420.5 565.5,398.5 567.5,392.5 587.5,392.5 587.5,369.5 588.5,368.5 588.5,315.5 589.5,306.5 590.5,303.5 592.5,300.5 602.5,300.5" fill="none" stroke="#a64696" stroke-width="1" stroke-linejoin="miter"/><polyline points="214.5,501.5 219.5,501.5 220.5,508.5 220.5,499.5 221.5,420.5 222.5,398.5 223.5,393.5 224.5,392.5 243.5,392.5 244.5,385.5 245.5,302.5 245.5,287.5 247.5,287.5 247.5,283.5 248.5,295.5 250.5,295.5 250.5,273.5 252.5,273.5 253.5,282.5 254.5,283.5 258.5,283.5 258.5,294.5 259.5,294.5 259.5,283.5 266.5,283.5 266.5,295.5 267.5,295.5 267.5,284.5 270.5,283.5 271.5,289.5 272.5,295.5 273.5,295.5 273.5,283.5 275.5,283.5 276.5,295.5 277.5,283.5 277.5,300.5 278.5,350.5 279.5,380.5 280.5,390.5 281.5,392.5 285.5,391.5 286.5,380.5 287.5,392.5 301.5,392.5 301.5,400.5 302.5,401.5 302.5,488.5 303.5,489.5 304.5,489.5 304.5,499.5 315.5,499.5 315.5,488.5 316.5,488.5 316.5,499.5 334.5,499.5 334.5,509.5 335.5,400.5 336.5,396.5 337.5,393.5 338.5,392.5 358.5,392.5 359.5,380.5 360.5,305.5 361.5,290.5 361.5,283.5 362.5,295.5 363.5,283.5 363.5,295.5 364.5,283.5 365.5,290.5 366.5,286.5 368.5,284.5 369.5,283.5 370.5,273.5 371.5,273.5 372.5,283.5 375.5,283.5 375.5,273.5 376.5,277.5 377.5,295.5 378.5,283.5 380.5,283.5 381.5,295.5 382.5,283.5 385.5,283.5 386.5,295.5 387.5,295.5 388.5,283.5 391.5,283.5 391.5,300.5 392.5,360.5 393.5,375.5 394.5,390.5 395.5,392.5 416.5,392.5 416.5,470.5 416.5,490.5 417.5,494.5 418.5,499.5 418.5,488.5 419.5,499.5 420.5,488.5 421.5,499.5 426.5,499.5 427.5,509.5 428.5,499.5 429.5,488.5 430.5,488.5 431.5,499.5 432.5,510.5 433.5,488.5 434.5,499.5 438.5,499.5 439.5,488.5 440.5,499.5 441.5,499.5 442.5,509.5 443.5,499.5 444.5,509.5 445.5,499.5 447.5,510.5 448.5,480.5 449.5,420.5 450.5,398.5 451.5,394.5 453.5,392.5 471.5,392.5 472.5,380.5 473.5,330.5 474.5,300.5 474.5,295.5 475.5,288.5 476.5,283.5 477.5,295.5 478.5,283.5 481.5,283.5 481.5,295.5 482.5,283.5 488.5,283.5 489.5,273.5 490.5,273.5 491.5,279.5 493.5,284.5 494.5,285.5 494.5,295.5 495.5,295.5 496.5,283.5 498.5,283.5 499.5,295.5 500.5,283.5 503.5,283.5 504.5,295.5 505.5,283.5 505.5,300.5 506.5,350.5 507.5,380.5 508.5,390.5 509.5,392.5 510.5,392.5 510.5,380.5 511.5,392.5 523.5,392.5 524.5,402.5 524.5,392.5 529.5,392.5 530.5,395.5 531.5,499.5 535.5,499.5 536.5,510.5 537.5,499.5 538.5,508.5 539.5,499.5 540.5,488.5 541.5,499.5 542.5,488.5 543.5,509.5 544.5,488.5 545.5,488.5 546.5,499.5 551.5,499.5 552.5,488.5 553.5,499.5 554.5,488.5 555.5,499.5 558.5,496.5 559.5,488.5 560.5,499.5 561.5,488.5 562.5,499.5 563.5,488.5 563.5,420.5 564.5,396.5 565.5,392.5 587.5,392.5 587.5,369.5 588.5,368.5 588.5,301.5 589.5,283.5 590.5,290.5 591.5,283.5 592.5,295.5 593.5,283.5 601.5,283.5 602.5,273.5" fill="none" stroke="#ece634" stroke-width="1" stroke-linejoin="miter"/></g><rect x="116.5" y="854.5" width="587" height="20" fill="#e0e0e0" stroke="#000" stroke-width="1" shape-rendering="crispEdges"/><rect x="362" y="854" width="1" height="10" fill="#000" shape-rendering="crispEdges"/><text x="224.5" y="869.5" font-size="11" fill="#000">Item</text><text x="516.5" y="868" font-size="11" fill="#000" letter-spacing="0.5">Value</text></svg>
</body></html>
